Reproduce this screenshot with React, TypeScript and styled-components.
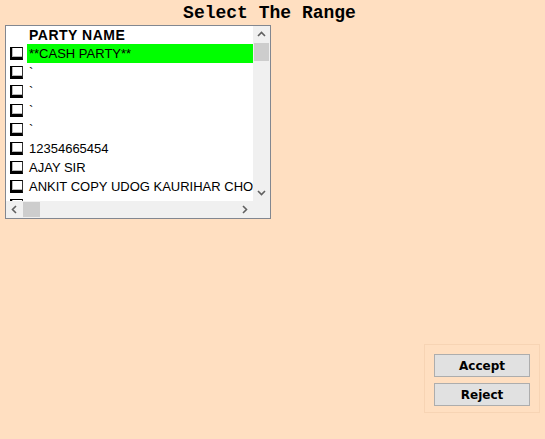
import styled, { createGlobalStyle } from 'styled-components';

const GlobalStyle = createGlobalStyle`
  body {
    margin: 0;
    background: #ffdfc1;
    font-family: "Liberation Sans", Arial, sans-serif;
  }
`;

const Page = styled.div`
  display: flex;
  flex-direction: column;
  width: 545px;
  height: 439px;
  background: #ffdfc1;
`;

const Title = styled.h1`
  margin: 0;
  height: 25px;
  line-height: 26px;
  padding-right: 6px;
  text-align: center;
  font-family: "Liberation Mono", "Courier New", monospace;
  font-size: 18px;
  font-weight: bold;
  color: #000;
`;

const ListBox = styled.div`
  display: grid;
  grid-template-columns: 1fr 17px;
  grid-template-rows: 1fr 17px;
  width: 264px;
  height: 192px;
  margin-left: 5px;
  border: 1px solid #828790;
  background: #fff;
`;

const ListContent = styled.div`
  overflow: hidden;
`;

const Header = styled.div`
  height: 18px;
  line-height: 19px;
  padding-left: 23px;
  font-size: 14px;
  font-weight: bold;
  letter-spacing: 0.5px;
  color: #000;
`;

const Row = styled.div`
  display: flex;
  height: 19px;
`;

const CheckCell = styled.div`
  width: 21px;
  flex: none;
  display: flex;
  align-items: center;
  padding-left: 4px;
  box-sizing: border-box;
`;

const CheckBox = styled.span`
  width: 13px;
  height: 13px;
  box-sizing: border-box;
  background: #fff;
  border: 1px solid #000;
  border-right-color: #333;
  border-left-width: 2px;
  border-bottom-width: 3px;
  box-shadow: inset 1px -1px 0 #b8b8b8;
`;

const NameCell = styled.div<{ $selected?: boolean }>`
  flex: 1;
  min-width: 0;
  padding-left: 2px;
  line-height: 19px;
  font-size: 13px;
  white-space: nowrap;
  overflow: hidden;
  color: #000;
  background: ${(p) => (p.$selected ? '#00ff00' : 'transparent')};
`;

const VScroll = styled.div`
  display: flex;
  flex-direction: column;
  background: #f0f0f0;
`;

const HScroll = styled.div`
  display: flex;
  background: #f0f0f0;
`;

const ArrowBtn = styled.div`
  width: 17px;
  height: 17px;
  flex: none;
  display: flex;
  align-items: center;
  justify-content: center;
`;

const Track = styled.div<{ $dir: 'v' | 'h' }>`
  flex: 1;
  display: flex;
  flex-direction: ${(p) => (p.$dir === 'v' ? 'column' : 'row')};
  padding: ${(p) => (p.$dir === 'v' ? '0 1px' : '1px 0')};
`;

const Thumb = styled.div<{ $dir: 'v' | 'h' }>`
  background: #cdcdcd;
  ${(p) => (p.$dir === 'v' ? 'height: 18px;' : 'width: 17px;')}
`;

const Corner = styled.div`
  background: #f0f0f0;
`;

const ButtonPanel = styled.div`
  display: flex;
  flex-direction: column;
  gap: 6px;
  align-self: flex-end;
  margin-top: auto;
  margin-right: 5px;
  margin-bottom: 26px;
  padding: 9px 9px 6px;
  width: 96px;
  border: 1px solid #f7d4b4;
`;

const Button = styled.button`
  height: 23px;
  padding: 0;
  background: #e1e1e1;
  border: 1px solid #adadad;
  font-family: "DejaVu Sans", Verdana, sans-serif;
  font-size: 12px;
  font-weight: bold;
  color: #000;
`;

const Chevron = ({ d }: { d: string }) => (
  <svg width="9" height="9" viewBox="0 0 9 9">
    <path d={d} fill="none" stroke="#606060" strokeWidth="1.6" />
  </svg>
);

const parties = [
  '**CASH PARTY**',
  '`',
  '`',
  '`',
  '`',
  '12354665454',
  'AJAY SIR',
  'ANKIT COPY UDOG KAURIHAR CHOWK',
  'ANIL KUMAR',
];

export default function App() {
  return (
    <Page>
      <GlobalStyle />
      <Title>Select The Range</Title>
      <ListBox>
        <ListContent>
          <Header>PARTY NAME</Header>
          {parties.map((name, i) => (
            <Row key={i}>
              <CheckCell>
                <CheckBox />
              </CheckCell>
              <NameCell $selected={i === 0}>{name}</NameCell>
            </Row>
          ))}
        </ListContent>
        <VScroll>
          <ArrowBtn>
            <Chevron d="M1 6 L4.5 2.5 L8 6" />
          </ArrowBtn>
          <Track $dir="v">
            <Thumb $dir="v" />
          </Track>
          <ArrowBtn>
            <Chevron d="M1 3 L4.5 6.5 L8 3" />
          </ArrowBtn>
        </VScroll>
        <HScroll>
          <ArrowBtn>
            <Chevron d="M6 1 L2.5 4.5 L6 8" />
          </ArrowBtn>
          <Track $dir="h">
            <Thumb $dir="h" />
          </Track>
          <ArrowBtn>
            <Chevron d="M3 1 L6.5 4.5 L3 8" />
          </ArrowBtn>
        </HScroll>
        <Corner />
      </ListBox>
      <ButtonPanel>
        <Button>Accept</Button>
        <Button>Reject</Button>
      </ButtonPanel>
    </Page>
  );
}
